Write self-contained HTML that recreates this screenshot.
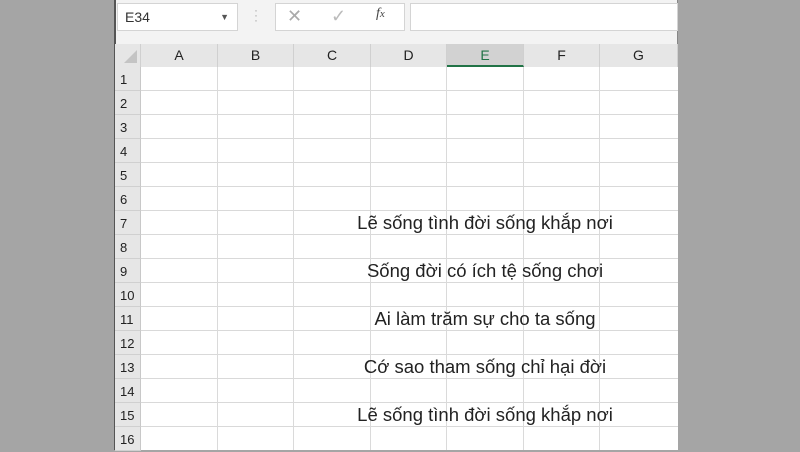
<!DOCTYPE html><html><head><style>
body{margin:0;width:800px;height:450px;background:#a5a5a5;position:relative;overflow:hidden;font-family:"Liberation Sans",sans-serif}
.win{position:absolute;left:114px;top:0;width:564px;height:450px;background:#f3f3f3;border-left:2px solid #555;border-right:1px solid #888;box-sizing:border-box}
.abs{position:absolute}
.hdr{position:absolute;top:44px;height:23px;background:#e6e6e6;border-right:1px solid #d0d0d0;box-sizing:border-box;text-align:center;font-size:14px;line-height:23px;color:#222}
.rh{position:absolute;left:115px;width:26px;height:24px;background:#e6e6e6;border-bottom:1px solid #d0d0d0;box-sizing:border-box;text-align:left;padding-left:5px;font-size:13px;line-height:25px;color:#222;border-right:1px solid #c8c8c8}
.txt{position:absolute;left:300px;width:370px;text-align:center;font-size:18.5px;color:#222}
</style></head><body>
<div class="win"></div>
<div class="abs" style="left:117px;top:3px;width:121px;height:28px;background:#fff;border:1px solid #d4d4d4;box-sizing:border-box;font-size:14px;line-height:26px;padding-left:7px;color:#333">E34<span style="position:absolute;right:8px;top:0;font-size:9px;color:#555">▼</span></div>
<div class="abs" style="left:254px;top:8px;color:#aaa;font-size:12px;line-height:5px">·<br>·<br>·</div>
<div class="abs" style="left:275px;top:3px;width:130px;height:28px;background:#fff;border:1px solid #d4d4d4;box-sizing:border-box"></div>
<div class="abs" style="left:287px;top:6px;color:#aaa;font-size:18px">✕</div>
<div class="abs" style="left:331px;top:6px;color:#bbb;font-size:18px">✓</div>
<div class="abs" style="left:376px;top:6px;color:#444;font-size:14px;font-style:italic;font-family:'Liberation Serif',serif">f<span style="font-size:11px">x</span></div>
<div class="abs" style="left:410px;top:3px;width:268px;height:28px;background:#fff;border:1px solid #d4d4d4;box-sizing:border-box"></div>
<div class="abs" style="left:115px;top:67px;width:563px;height:383px;background:#fff;
background-image:linear-gradient(#d9d9d9 1px,transparent 1px);background-size:100% 24px;background-position:0 -1px"></div>
<div class="hdr" style="left:115px;width:26px"><svg width="26" height="23" style="position:absolute;left:0;top:0"><polygon points="22,6 22,19 9,19" fill="#c4c4c4"/></svg></div>
<div class="hdr" style="left:141px;width:77px">A</div>
<div class="hdr" style="left:218px;width:76px">B</div>
<div class="hdr" style="left:294px;width:77px">C</div>
<div class="hdr" style="left:371px;width:76px">D</div>
<div class="hdr" style="left:447px;width:77px;background:#d2d2d2;border-bottom:2px solid #217346;color:#217346">E</div>
<div class="hdr" style="left:524px;width:76px">F</div>
<div class="hdr" style="left:600px;width:78px">G</div>
<div class="abs" style="left:217px;top:67px;width:1px;height:383px;background:#dadada"></div>
<div class="abs" style="left:293px;top:67px;width:1px;height:383px;background:#dadada"></div>
<div class="abs" style="left:370px;top:67px;width:1px;height:383px;background:#dadada"></div>
<div class="abs" style="left:446px;top:67px;width:1px;height:383px;background:#dadada"></div>
<div class="abs" style="left:523px;top:67px;width:1px;height:383px;background:#dadada"></div>
<div class="abs" style="left:599px;top:67px;width:1px;height:383px;background:#dadada"></div>
<div class="rh" style="top:67px">1</div><div class="rh" style="top:91px">2</div><div class="rh" style="top:115px">3</div><div class="rh" style="top:139px">4</div><div class="rh" style="top:163px">5</div><div class="rh" style="top:187px">6</div><div class="rh" style="top:211px">7</div><div class="rh" style="top:235px">8</div><div class="rh" style="top:259px">9</div><div class="rh" style="top:283px">10</div><div class="rh" style="top:307px">11</div><div class="rh" style="top:331px">12</div><div class="rh" style="top:355px">13</div><div class="rh" style="top:379px">14</div><div class="rh" style="top:403px">15</div><div class="rh" style="top:427px">16</div>
<div class="txt" style="top:212px">Lẽ sống tình đời sống khắp nơi</div>
<div class="txt" style="top:260px">Sống đời có ích tệ sống chơi</div>
<div class="txt" style="top:308px">Ai làm trăm sự cho ta sống</div>
<div class="txt" style="top:356px">Cớ sao tham sống chỉ hại đời</div>
<div class="txt" style="top:404px">Lẽ sống tình đời sống khắp nơi</div>
</body></html>
